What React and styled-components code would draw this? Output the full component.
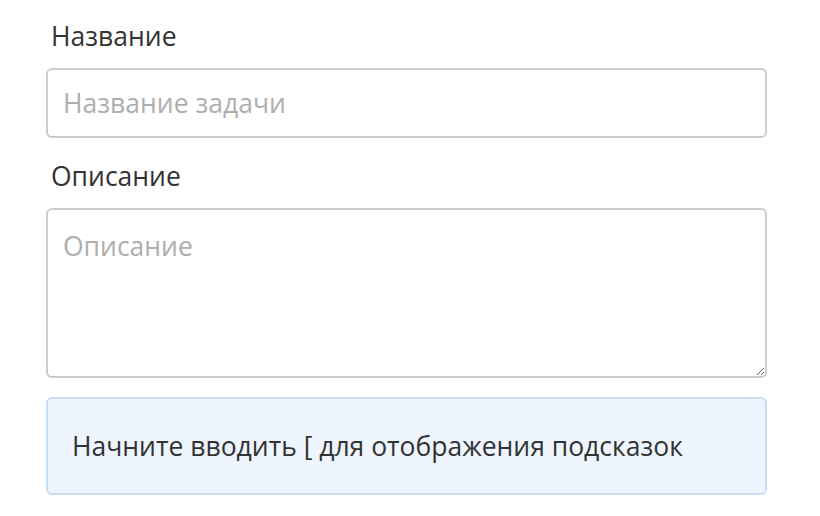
import React from 'react'
import styled, { createGlobalStyle } from 'styled-components'

const GlobalStyle = createGlobalStyle`
  body {
    margin: 0;
    background: #ffffff;
    font-family: 'Open Sans', 'Noto Sans', sans-serif;
  }
`

const Form = styled.form`
  width: 721px;
  padding: 19px 0 0 46px;
  display: flex;
  flex-direction: column;
`

const Label = styled.label`
  display: block;
  font-size: 26.5px;
  line-height: 35px;
  color: #333333;
  padding-left: 5px;
  margin: 0 0 14px;
`

const Input = styled.input`
  box-sizing: border-box;
  width: 100%;
  height: 70px;
  margin-bottom: 21px;
  padding: 0 15px;
  border: 2px solid #cccccc;
  border-radius: 6px;
  font-family: inherit;
  font-size: 26.5px;
  color: #333333;
  outline: none;

  &::placeholder {
    color: #aeaeae;
  }
`

const TextArea = styled.textarea`
  box-sizing: border-box;
  display: block;
  width: 100%;
  height: 170px;
  margin-bottom: 19px;
  padding: 18px 15px;
  border: 2px solid #cccccc;
  border-radius: 6px;
  font-family: inherit;
  font-size: 26.5px;
  line-height: 36px;
  color: #333333;
  outline: none;
  resize: vertical;

  &::placeholder {
    color: #aeaeae;
  }
`

const Hint = styled.div`
  box-sizing: border-box;
  height: 98px;
  padding: 0 24px;
  display: flex;
  align-items: center;
  background: #eef5fe;
  border: 2px solid #c9def6;
  border-radius: 6px;
  font-size: 26.5px;
  color: #333333;
`

export default function App() {
  return (
    <>
      <GlobalStyle />
      <Form>
        <Label htmlFor='title'>Название</Label>
        <Input id='title' placeholder='Название задачи' />
        <Label htmlFor='desc'>Описание</Label>
        <TextArea id='desc' placeholder='Описание' />
        <Hint>Начните вводить [ для отображения подсказок</Hint>
      </Form>
    </>
  )
}
